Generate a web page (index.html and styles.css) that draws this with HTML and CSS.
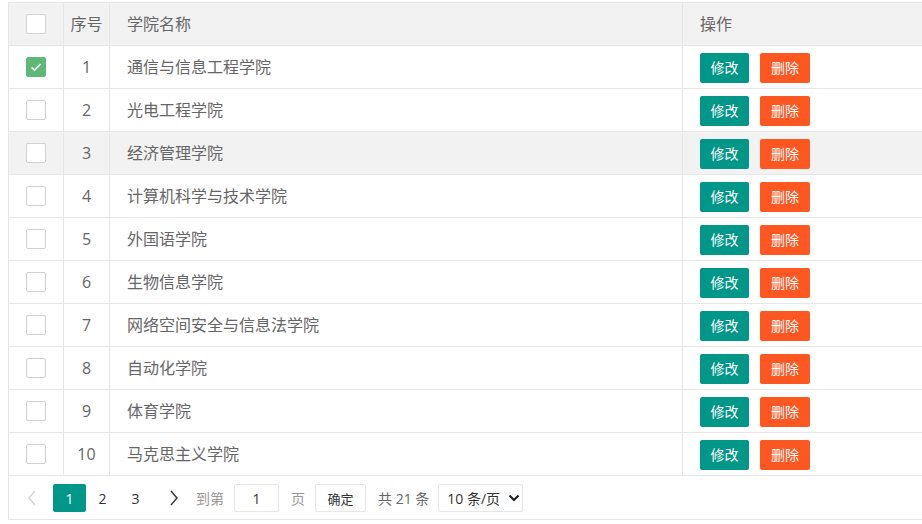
FILE: index.html
```html
<!DOCTYPE html>
<html lang="zh-CN">
<head>
<meta charset="utf-8">
<title>学院管理</title>
<link rel="stylesheet" href="styles.css">
</head>
<body>
<div class="table">
  <div class="row head">
    <div class="cell c1"><span class="cb"></span></div>
    <div class="cell c2">序号</div>
    <div class="cell c3">学院名称</div>
    <div class="cell c4">操作</div>
  </div>
  <div class="row">
    <div class="cell c1"><span class="cb on"><svg viewBox="0 0 20 20" width="20" height="20"><polyline points="5.5,10.5 8.5,13.2 14.5,7" fill="none" stroke="#fff" stroke-width="1.6"/></svg></span></div>
    <div class="cell c2">1</div>
    <div class="cell c3">通信与信息工程学院</div>
    <div class="cell c4"><span class="btn edit">修改</span><span class="btn del">删除</span></div>
  </div>
  <div class="row">
    <div class="cell c1"><span class="cb"></span></div>
    <div class="cell c2">2</div>
    <div class="cell c3">光电工程学院</div>
    <div class="cell c4"><span class="btn edit">修改</span><span class="btn del">删除</span></div>
  </div>
  <div class="row hover">
    <div class="cell c1"><span class="cb"></span></div>
    <div class="cell c2">3</div>
    <div class="cell c3">经济管理学院</div>
    <div class="cell c4"><span class="btn edit">修改</span><span class="btn del">删除</span></div>
  </div>
  <div class="row">
    <div class="cell c1"><span class="cb"></span></div>
    <div class="cell c2">4</div>
    <div class="cell c3">计算机科学与技术学院</div>
    <div class="cell c4"><span class="btn edit">修改</span><span class="btn del">删除</span></div>
  </div>
  <div class="row">
    <div class="cell c1"><span class="cb"></span></div>
    <div class="cell c2">5</div>
    <div class="cell c3">外国语学院</div>
    <div class="cell c4"><span class="btn edit">修改</span><span class="btn del">删除</span></div>
  </div>
  <div class="row">
    <div class="cell c1"><span class="cb"></span></div>
    <div class="cell c2">6</div>
    <div class="cell c3">生物信息学院</div>
    <div class="cell c4"><span class="btn edit">修改</span><span class="btn del">删除</span></div>
  </div>
  <div class="row">
    <div class="cell c1"><span class="cb"></span></div>
    <div class="cell c2">7</div>
    <div class="cell c3">网络空间安全与信息法学院</div>
    <div class="cell c4"><span class="btn edit">修改</span><span class="btn del">删除</span></div>
  </div>
  <div class="row">
    <div class="cell c1"><span class="cb"></span></div>
    <div class="cell c2">8</div>
    <div class="cell c3">自动化学院</div>
    <div class="cell c4"><span class="btn edit">修改</span><span class="btn del">删除</span></div>
  </div>
  <div class="row">
    <div class="cell c1"><span class="cb"></span></div>
    <div class="cell c2">9</div>
    <div class="cell c3">体育学院</div>
    <div class="cell c4"><span class="btn edit">修改</span><span class="btn del">删除</span></div>
  </div>
  <div class="row">
    <div class="cell c1"><span class="cb"></span></div>
    <div class="cell c2">10</div>
    <div class="cell c3">马克思主义学院</div>
    <div class="cell c4"><span class="btn edit">修改</span><span class="btn del">删除</span></div>
  </div>
  <div class="pager">
    <span class="pg prev"><svg viewBox="0 0 10 16" width="10" height="16"><polyline points="8,1 2,8 8,15" fill="none" stroke="#d2d2d2" stroke-width="1.4"/></svg></span>
    <span class="pg num cur">1</span>
    <span class="pg num">2</span>
    <span class="pg num">3</span>
    <span class="pg next"><svg viewBox="0 0 10 16" width="10" height="16"><polyline points="2,1 8,8 2,15" fill="none" stroke="#333" stroke-width="1.4"/></svg></span>
    <span class="txt skip">到第</span>
    <span class="input">1</span>
    <span class="txt page">页</span>
    <span class="ok">确定</span>
    <span class="txt count">共 21 条</span>
    <span class="select">10 条/页<svg viewBox="0 0 12 8" width="12" height="8"><polyline points="1.5,1.5 6,6 10.5,1.5" fill="none" stroke="#222" stroke-width="2.2"/></svg></span>
  </div>
</div>
</body>
</html>
```
FILE: styles.css
```css
html, body {
  margin: 0;
  padding: 0;
  overflow: hidden;
  background: #fff;
}
body {
  font-family: "Open Sans", "Noto Sans CJK SC", sans-serif;
  font-size: 14px;
  color: #666;
}
.table {
  margin: 2px 0 0 8px;
  width: 940px;
  border-top: 1px solid #e6e6e6;
  border-left: 1px solid #e6e6e6;
}
.row {
  display: flex;
  height: 43px;
  box-sizing: border-box;
  border-bottom: 1px solid #e6e6e6;
}
.head, .hover {
  background: #f2f2f2;
}
.cell {
  display: flex;
  align-items: center;
  box-sizing: border-box;
  border-right: 1px solid #e6e6e6;
  line-height: 22px;
  font-size: 16px;
  white-space: nowrap;
}
.c1 { width: 55px; justify-content: center; }
.c2 { width: 46px; justify-content: center; }
.c3 { width: 573px; padding-left: 17px; }
.c4 { flex: 1; padding-left: 17px; border-right: none; }
.cb {
  width: 20px;
  height: 20px;
  box-sizing: border-box;
  border: 1px solid #d2d2d2;
  border-radius: 2px;
  background: #fff;
  display: block;
  position: relative;
}
.cb.on {
  background: #5fb878;
  border-color: #5fb878;
}
.cb svg {
  position: absolute;
  left: -1px;
  top: -1px;
}
.btn {
  display: inline-block;
  width: 49px;
  height: 30px;
  line-height: 30px;
  text-align: center;
  color: #fff;
  border-radius: 2px;
  font-size: 14px;
  margin-top: 1px;
}
.btn.del { margin-left: 11px; width: 50px; }
.edit { background: #009688; }
.del { background: #ff5722; }
.pager {
  display: flex;
  align-items: center;
  height: 44px;
  box-sizing: border-box;
  border-bottom: 1px solid #e6e6e6;
  padding: 1px 0 0 3px;
}
.pg {
  height: 28px;
  display: flex;
  align-items: center;
  justify-content: center;
  color: #333;
}
.prev { width: 39px; margin-right: 2px; }
.num { width: 33px; }
.cur {
  background: #009688;
  color: #fff;
  border-radius: 2px;
}
.next { width: 44px; }
.txt { color: #999; }
.count { color: #666; margin-left: 12px; }
.input {
  width: 45px;
  height: 28px;
  box-sizing: border-box;
  border: 1px solid #e6e6e6;
  border-radius: 2px;
  margin-left: 10px;
  display: flex;
  align-items: center;
  justify-content: center;
  color: #333;
}
.page { margin-left: 12px; }
.ok {
  width: 51px;
  height: 28px;
  box-sizing: border-box;
  border: 1px solid #e6e6e6;
  border-radius: 2px;
  margin-left: 10px;
  display: flex;
  align-items: center;
  justify-content: center;
  color: #333;
  font-size: 13px;
}
.select {
  width: 85px;
  height: 28px;
  box-sizing: border-box;
  border: 1px solid #e6e6e6;
  border-radius: 2px;
  margin-left: 9px;
  display: flex;
  align-items: center;
  padding-left: 8px;
  color: #333;
  gap: 8px;
}
```
